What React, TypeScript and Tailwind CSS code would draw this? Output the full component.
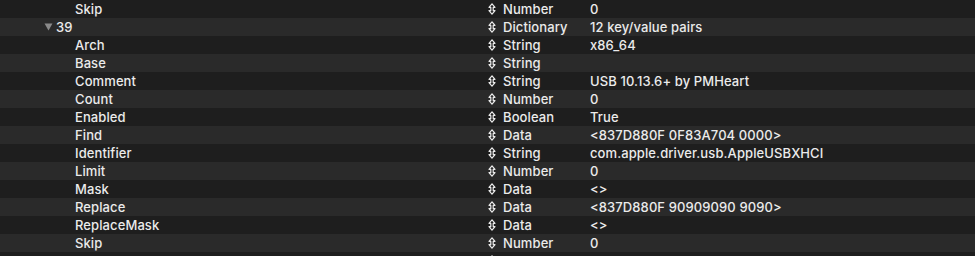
import React from "react";

type Row = { key: string; type: string; value: string; parent?: boolean };

const rows: Row[] = [
  { key: "Skip", type: "Number", value: "0" },
  { key: "39", type: "Dictionary", value: "12 key/value pairs", parent: true },
  { key: "Arch", type: "String", value: "x86_64" },
  { key: "Base", type: "String", value: "" },
  { key: "Comment", type: "String", value: "USB 10.13.6+ by PMHeart" },
  { key: "Count", type: "Number", value: "0" },
  { key: "Enabled", type: "Boolean", value: "True" },
  { key: "Find", type: "Data", value: "<837D880F 0F83A704 0000>" },
  { key: "Identifier", type: "String", value: "com.apple.driver.usb.AppleUSBXHCI" },
  { key: "Limit", type: "Number", value: "0" },
  { key: "Mask", type: "Data", value: "<>" },
  { key: "Replace", type: "Data", value: "<837D880F 90909090 9090>" },
  { key: "ReplaceMask", type: "Data", value: "<>" },
  { key: "Skip", type: "Number", value: "0" },
  { key: "", type: "", value: "" },
];

function UpDown() {
  return (
    <svg width="8" height="12" viewBox="0 0 8 12" className="shrink-0">
      <path
        d="M4 0.8 L7 4.3 H5.2 V7.7 H7 L4 11.2 L1 7.7 H2.8 V4.3 H1 Z"
        fill="none"
        stroke="#ececec"
        strokeWidth="1.2"
        strokeLinejoin="round"
      />
    </svg>
  );
}

export default function App() {
  return (
    <div
      className="w-[975px] h-[256px] overflow-hidden bg-[#1e1e1e] text-[13px] font-medium tracking-[0.1px] text-[#ebebeb]"
      style={{ fontFamily: "Inter, 'Noto Sans', sans-serif" }}
    >
      {rows.map((r, i) => (
        <div
          key={i}
          className={`flex h-[18px] items-center leading-[18px] ${i % 2 === 1 ? "bg-[#2a2a2a]" : "bg-[#1e1e1e]"}`}
        >
          <div className="w-[488px] shrink-0 flex items-center">
            {r.parent ? (
              <div className="flex items-center pl-[44px]">
                <svg width="9" height="8" viewBox="0 0 9 8" className="mr-[3px]">
                  <path d="M0.5 0.5 H8.5 L4.5 7.5 Z" fill="#8a8a8a" />
                </svg>
                <span>{r.key}</span>
              </div>
            ) : (
              <span className="pl-[75px]">{r.key}</span>
            )}
          </div>
          <div className="w-[102px] shrink-0 flex items-center">
            {(r.type || i === 14) && <UpDown />}
            <span className="ml-[7px]">{r.type}</span>
          </div>
          <div className="flex-1">{r.value}</div>
        </div>
      ))}
    </div>
  );
}
